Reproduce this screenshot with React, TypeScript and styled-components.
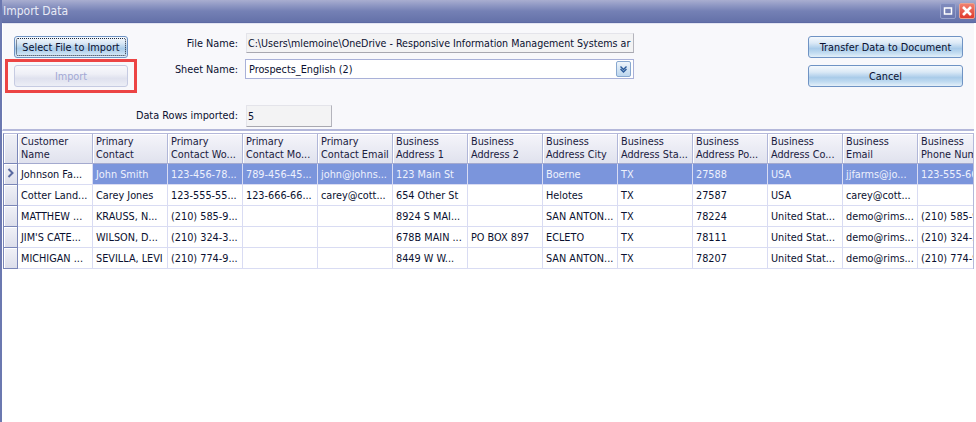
import React from 'react';
import styled, { createGlobalStyle } from 'styled-components';

const GlobalStyle = createGlobalStyle`
  html, body {
    margin: 0;
    padding: 0;
    background: #fff;
  }
  body {
    font-family: "DejaVu Sans Condensed", "DejaVu Sans", "Liberation Sans", sans-serif;
    font-stretch: condensed;
    font-size: 10.8px;
    color: #0a1030;
  }
`;

const Window = styled.div`
  width: 976px;
  height: 422px;
  display: flex;
  flex-direction: column;
  overflow: hidden;
  box-sizing: border-box;
  border-left: 2px solid #6b78b0;
  background: #fff;
`;

const TitleBar = styled.div`
  height: 23px;
  margin-left: -2px;
  flex: none;
  display: flex;
  align-items: center;
  justify-content: space-between;
  padding: 0 1px 0 3px;
  box-sizing: border-box;
  background: linear-gradient(#a9aed0 0, #8e97c3 25%, #7581b5 50%, #6471a9 100%);
  border-bottom: 1px solid #5d6aa3;
`;

const Title = styled.span`
  color: #e9ebf6;
  font-size: 12px;
`;

const WindowButtons = styled.div`
  display: flex;
  gap: 3px;
`;

const WindowButton = styled.div<{ $close?: boolean }>`
  width: 16px;
  height: 16px;
  box-sizing: border-box;
  border: 1px solid ${(p) => (p.$close ? '#e8a090' : '#95a0cc')};
  border-radius: 2px;
  background: ${(p) =>
    p.$close ? 'linear-gradient(#f08070, #e03a2c)' : 'linear-gradient(#7f8bbd, #6a76ae)'};
  display: flex;
  align-items: center;
  justify-content: center;
`;

const FormArea = styled.div`
  position: relative;
  height: 108px;
  flex: none;
  box-sizing: border-box;
  margin-right: 2px;
  padding: 12px 11px 0 11px;
  display: flex;
  background: #f8f8fb;
  border-left: 1px solid #fff;
  border-top: 1px solid #e2e4f2;
  border-bottom: 2px solid #b4b8da;
`;

const LeftButtons = styled.div`
  width: 114px;
  display: flex;
  flex-direction: column;
  gap: 7px;
`;

const RightButtons = styled.div`
  width: 155px;
  display: flex;
  flex-direction: column;
  gap: 7px;
  margin-left: auto;
`;

const Button = styled.div<{ $disabled?: boolean; $focused?: boolean }>`
  position: relative;
  height: 22px;
  box-sizing: border-box;
  display: flex;
  align-items: center;
  justify-content: center;
  border-radius: 3px;
  border: 1px solid ${(p) => (p.$disabled ? '#c6cbe2' : '#6f93c4')};
  color: ${(p) => (p.$disabled ? '#a2a8d4' : '#0a1030')};
  background: ${(p) =>
    p.$disabled
      ? 'linear-gradient(#f8f8fc 0, #eeeff6 40%, #dfe1ee 62%, #eceef6 100%)'
      : 'linear-gradient(#f5f9fd 0, #dbe9f6 30%, #a9cbe9 58%, #c2dcf1 80%, #e4f0f9 100%)'};
  ${(p) =>
    p.$focused &&
    `&::after {
      content: '';
      position: absolute;
      inset: 1px;
      border: 1px dotted #20283c;
      border-radius: 2px;
    }`}
`;

const Highlight = styled.div`
  position: absolute;
  left: 2px;
  top: 35px;
  width: 132px;
  height: 34px;
  box-sizing: border-box;
  border: 3px solid #ec4444;
`;

const Fields = styled.div`
  margin-left: 6px;
  margin-top: -3px;
  display: grid;
  grid-template-columns: 111px 389px;
  grid-template-rows: 20px 20px 42px;
  align-items: center;
  row-gap: 6px;
  align-content: start;
`;

const LabelText = styled.label<{ $low?: boolean }>`
  text-align: right;
  padding-right: 7px;
  white-space: nowrap;
  ${(p) => p.$low && 'align-self: end; line-height: 22px;'}
`;

const ReadOnlyBox = styled.div<{ $narrow?: boolean }>`
  width: ${(p) => (p.$narrow ? '86px' : '388px')};
  margin-left: 1px;
  height: ${(p) => (p.$narrow ? '22px' : '100%')};
  ${(p) => p.$narrow && 'align-self: end;'}
  box-sizing: border-box;
  padding: 0 1px;
  font-size: 10.6px;
  display: flex;
  align-items: center;
  white-space: nowrap;
  overflow: hidden;
  background: #f3f3f4;
  border: 1px solid #e4e4ea;
  border-right-color: #b4b4bc;
  border-bottom-color: #a8a8b0;
`;

const SheetBox = styled.div`
  height: 100%;
  box-sizing: border-box;
  padding: 0 2px 0 3px;
  display: flex;
  align-items: center;
  justify-content: space-between;
  background: #fff;
  border: 1px solid #a9b1d8;
`;

const DropButton = styled.div`
  width: 15px;
  height: 16px;
  box-sizing: border-box;
  border: 1px solid #88a8d0;
  border-radius: 2px;
  background: linear-gradient(#eef5fb, #bcd6ee);
  display: flex;
  align-items: center;
  justify-content: center;
`;

const GridArea = styled.div`
  margin: 2px 2px 0 1px;
  border-left: 1px solid #7a86b8;
  border-right: 1px solid #b4b8da;
  border-top: 1px solid #b4b8da;
  overflow: hidden;
`;

const Table = styled.table`
  table-layout: fixed;
  border-collapse: separate;
  border-spacing: 0;
  width: 989px;
`;

const HeaderCell = styled.th`
  height: 30px;
  box-sizing: border-box;
  padding: 0 3px 1px 3px;
  font-weight: normal;
  text-align: left;
  line-height: 13px;
  white-space: pre;
  overflow: hidden;
  color: #1a2040;
  background: linear-gradient(#f5f5fa, #e0e2ee);
  border-right: 1px solid #b0b6d8;
  border-bottom: 1px solid #a4aacf;
  box-shadow: inset 1px 1px 0 #fff;
`;

const RowHeader = styled.td`
  padding: 0;
  box-sizing: border-box;
  text-align: center;
  vertical-align: middle;
  background: linear-gradient(#f0f1f7, #dcdeeb);
  border-right: 1px solid #7a86b8;
  border-bottom: 1px solid #7a86b8;
  box-shadow: inset 1px 1px 0 #fff;
`;

const Cell = styled.td<{ $selected?: boolean }>`
  height: 21px;
  box-sizing: border-box;
  padding: 0 3px;
  white-space: nowrap;
  overflow: hidden;
  color: ${(p) => (p.$selected ? '#eef1fc' : '#0a1030')};
  background: ${(p) => (p.$selected ? '#7b95dc' : '#fff')};
  border-right: 1px solid #d9dcf3;
  border-bottom: 1px solid #d9dcf3;
`;

const HEADERS = [
  'Customer\nName',
  'Primary\nContact',
  'Primary\nContact Wo...',
  'Primary\nContact Mo...',
  'Primary\nContact Email',
  'Business\nAddress 1',
  'Business\nAddress 2',
  'Business\nAddress City',
  'Business\nAddress Sta...',
  'Business\nAddress Po...',
  'Business\nAddress Co...',
  'Business\nEmail',
  'Business\nPhone Num',
];

const ROWS = [
  ['Johnson Fa...', 'John Smith', '123-456-78...', '789-456-45...', 'john@johns...', '123 Main St', '', 'Boerne', 'TX', '27588', 'USA', 'jjfarms@jo...', '123-555-66'],
  ['Cotter Land...', 'Carey Jones', '123-555-55...', '123-666-66...', 'carey@cott...', '654 Other St', '', 'Helotes', 'TX', '27587', 'USA', 'carey@cott...', ''],
  ['MATTHEW ...', 'KRAUSS, N...', '(210) 585-9...', '', '', '8924 S MAI...', '', 'SAN ANTON...', 'TX', '78224', 'United Stat...', 'demo@rims...', '(210) 585-9'],
  ["JIM'S CATE...", 'WILSON, D...', '(210) 324-3...', '', '', '678B MAIN ...', 'PO BOX 897', 'ECLETO', 'TX', '78111', 'United Stat...', 'demo@rims...', '(210) 324-3'],
  ['MICHIGAN ...', 'SEVILLA, LEVI', '(210) 774-9...', '', '', '8449 W  W...', '', 'SAN ANTON...', 'TX', '78207', 'United Stat...', 'demo@rims...', '(210) 774-9'],
];

const App: React.FC = () => {
  return (
    <Window>
      <GlobalStyle />
      <TitleBar>
        <Title>Import Data</Title>
        <WindowButtons>
          <WindowButton>
            <svg width="10" height="10" viewBox="0 0 10 10">
              <rect x="1.5" y="2" width="7" height="6" fill="none" stroke="#fff" strokeWidth="1.5" />
            </svg>
          </WindowButton>
          <WindowButton $close>
            <svg width="12" height="12" viewBox="0 0 12 12">
              <path d="M2 2 L10 10 M10 2 L2 10" stroke="#fff" strokeWidth="2.6" />
            </svg>
          </WindowButton>
        </WindowButtons>
      </TitleBar>
      <FormArea>
        <LeftButtons>
          <Button $focused>Select File to Import</Button>
          <Button $disabled>Import</Button>
        </LeftButtons>
        <Highlight />
        <Fields>
          <LabelText>File Name:</LabelText>
          <ReadOnlyBox>C:\Users\mlemoine\OneDrive - Responsive Information Management Systems ar</ReadOnlyBox>
          <LabelText>Sheet Name:</LabelText>
          <SheetBox>
            Prospects_English (2)
            <DropButton>
              <svg width="9" height="8" viewBox="0 0 9 8">
                <path d="M1.5 1.5 L4.5 4.5 L7.5 1.5 M1.5 4 L4.5 7 L7.5 4" fill="none" stroke="#2a5a9a" strokeWidth="1.4" />
              </svg>
            </DropButton>
          </SheetBox>
          <LabelText $low>Data Rows imported:</LabelText>
          <ReadOnlyBox $narrow>5</ReadOnlyBox>
        </Fields>
        <RightButtons>
          <Button>Transfer Data to Document</Button>
          <Button>Cancel</Button>
        </RightButtons>
      </FormArea>
      <GridArea>
        <Table>
          <colgroup>
            <col style={{ width: 14 }} />
            {HEADERS.map((h) => (
              <col key={h} style={{ width: 75 }} />
            ))}
          </colgroup>
          <thead>
            <tr>
              <RowHeader />
              {HEADERS.map((h) => (
                <HeaderCell key={h}>{h}</HeaderCell>
              ))}
            </tr>
          </thead>
          <tbody>
            {ROWS.map((row, r) => (
              <tr key={r}>
                <RowHeader>
                  {r === 0 && (
                    <svg width="7" height="10" viewBox="0 0 7 10">
                      <path d="M1.5 1 L5.5 5 L1.5 9" fill="none" stroke="#5a6aa0" strokeWidth="2" />
                    </svg>
                  )}
                </RowHeader>
                {row.map((value, c) => (
                  <Cell key={c} $selected={r === 0 && c > 0}>
                    {value}
                  </Cell>
                ))}
              </tr>
            ))}
          </tbody>
        </Table>
      </GridArea>
    </Window>
  );
};

export default App;
